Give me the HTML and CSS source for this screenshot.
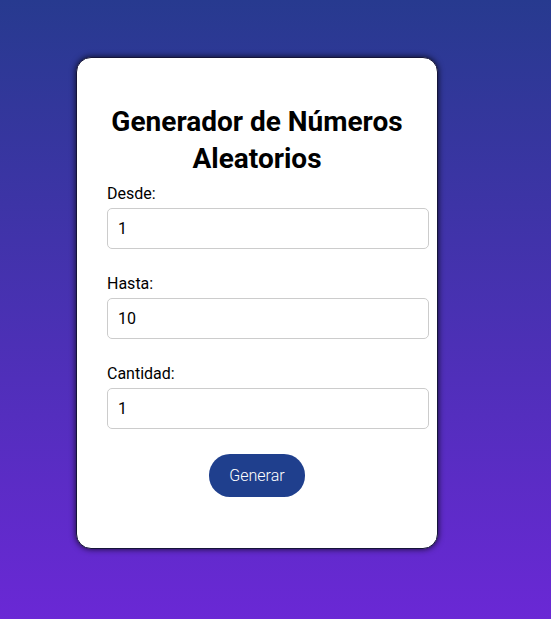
FILE: index.html
```html
<!DOCTYPE html>
<html lang="es">
<head>
<meta charset="utf-8">
<title>Generador de Números Aleatorios</title>
<link rel="stylesheet" href="styles.css">
</head>
<body>
<div class="card">
  <h2 class="title">Generador de Números Aleatorios</h2>
  <div class="field">
    <label class="label" for="desde">Desde:</label>
    <input class="input" id="desde" type="text" value="1">
  </div>
  <div class="field">
    <label class="label" for="hasta">Hasta:</label>
    <input class="input" id="hasta" type="text" value="10">
  </div>
  <div class="field">
    <label class="label" for="cantidad">Cantidad:</label>
    <input class="input" id="cantidad" type="text" value="1">
  </div>
  <div class="actions">
    <button class="btn" type="button">Generar</button>
  </div>
</div>
</body>
</html>
```
FILE: styles.css
```css
html, body {
  height: 100%;
}
body {
  margin: 0;
  font-family: Roboto, "Liberation Sans", sans-serif;
  background: linear-gradient(to bottom, #273a8f, #6a28d5);
  padding-top: 57px;
  padding-left: 76px;
  box-sizing: border-box;
}
.card {
  width: 300px;
  padding: 30px;
  background: #fff;
  border: 1px solid #15153a;
  border-radius: 15px;
  box-shadow: 0 0 6px rgba(0, 0, 0, 0.8);
}
.title {
  margin: 15px 0 7px;
  font-size: 28px;
  font-weight: 700;
  text-align: center;
  color: #000;
  line-height: 37px;
}
.field {
  margin-bottom: 25px;
}
.label {
  display: block;
  font-size: 16px;
  margin-bottom: 5px;
  color: #000;
}
.input {
  width: 100%;
  padding: 10px;
  font-size: 16px;
  font-family: Roboto, "Liberation Sans", sans-serif;
  border: 1px solid #ccc;
  border-radius: 5px;
  color: #000;
  margin: 0;
}
.actions {
  text-align: center;
  margin-top: 0;
  margin-bottom: 21px;
}
.btn {
  background: #1f3f8d;
  color: #fff;
  border: none;
  border-radius: 21px;
  padding: 12px 20px;
  font-size: 16px;
  font-family: Roboto, "Liberation Sans", sans-serif;
  font-weight: 300;
}
```
